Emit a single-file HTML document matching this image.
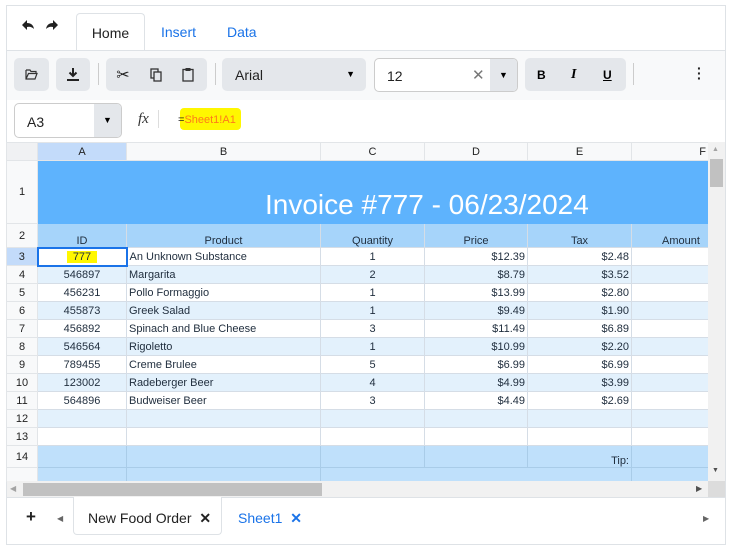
<!DOCTYPE html>
<html><head><meta charset="utf-8"><style>
*{box-sizing:border-box;margin:0;padding:0}
body{width:747px;height:555px;background:#fff;font-family:"Liberation Sans",Arial,sans-serif;position:relative;overflow:hidden}
.frame{position:absolute;left:6px;top:5px;width:720px;height:540px;border:1px solid #dee2e6}
.abs{position:absolute}
.btn{position:absolute;background:#e4e7eb;border-radius:5px;top:58px;height:33px}
.ic{position:absolute;top:0;height:33px;display:flex;align-items:center;justify-content:center;font-size:13px;color:#222}
table{position:absolute;left:6px;top:142px;border-collapse:collapse;table-layout:fixed;font-size:11px;color:#1f2d3d}
td{border:1px solid #d5dde6;padding:0 2px;white-space:nowrap;overflow:hidden}
.rh{background:#f8f9fa;text-align:center;color:#222;font-size:11px;border-color:#e2e5e8}
.ch td{background:#f8f9fa;text-align:center;color:#222;border-color:#e2e5e8;height:18px}
.c{text-align:center}.r{text-align:right}
.w td:not(.rh){background:#fff}
.b td:not(.rh){background:#e3f1fc}
</style></head><body>
<div class="frame"></div>
<svg class="abs" style="left:21px;top:19px" width="44" height="14" viewBox="0 0 44 14"><path d="M1 6 L6 1 L6 4 Q12 4 13 10 Q10 7 6 8 L6 11 Z" fill="#222"/><path d="M37 6 L32 1 L32 4 Q26 4 25 10 Q28 7 32 8 L32 11 Z" fill="#222"/></svg>
<div class="abs" style="left:76px;top:13px;width:69px;height:38px;border:1px solid #dee2e6;border-bottom:none;border-radius:4px 4px 0 0;background:#fff;font-size:14px;color:#222;text-align:center;line-height:38px">Home</div>
<div class="abs" style="left:161px;top:24px;font-size:14px;color:#1a73e8">Insert</div>
<div class="abs" style="left:227px;top:24px;font-size:14px;color:#1a73e8">Data</div>
<div class="abs" style="left:7px;top:50px;width:718px;height:50px;background:#f8f9fa;border-top:1px solid #dee2e6"></div>
<div class="btn" style="left:14px;width:35px"><svg style="position:absolute;left:11px;top:11px" width="13" height="11" viewBox="0 0 13 11"><path d="M1 1h4l1 1.5h5v2M1 1v9h9l2-5.5H3.5L1 10" fill="none" stroke="#333" stroke-width="1.2"/></svg></div>
<div class="btn" style="left:56px;width:34px"><svg style="position:absolute;left:10px;top:9px" width="14" height="15" viewBox="0 0 14 15"><path d="M7 1v8M3.5 5.5L7 9l3.5-3.5" fill="none" stroke="#222" stroke-width="2"/><rect x="1" y="12" width="12" height="2" fill="#222"/></svg></div>
<div class="abs" style="left:98px;top:63px;width:1px;height:22px;background:#ccc"></div>
<div class="btn" style="left:106px;width:101px">
<div class="ic" style="left:0;width:34px;font-size:16px">✂</div>
<svg style="position:absolute;left:44px;top:10px" width="13" height="14" viewBox="0 0 13 14"><rect x="1" y="1" width="7" height="9" fill="none" stroke="#333" stroke-width="1.3"/><rect x="4" y="4" width="7" height="9" fill="#e4e7eb" stroke="#333" stroke-width="1.3"/></svg>
<svg style="position:absolute;left:76px;top:9px" width="12" height="15" viewBox="0 0 12 15"><rect x="1" y="2.5" width="10" height="11.5" fill="none" stroke="#333" stroke-width="1.3"/><rect x="3.5" y="1" width="5" height="3" fill="#333"/></svg>
</div>
<div class="abs" style="left:215px;top:63px;width:1px;height:22px;background:#ccc"></div>
<div class="btn" style="left:222px;width:144px"><span style="position:absolute;left:13px;top:9px;font-size:14px;color:#222">Arial</span><span style="position:absolute;right:11px;top:11px;font-size:9px">▼</span></div>
<div class="abs" style="left:374px;top:58px;width:144px;height:34px;border:1px solid #ccc;border-radius:5px;background:#fff;overflow:hidden"><span style="position:absolute;left:12px;top:9px;font-size:14px;color:#222">12</span><span style="position:absolute;left:97px;top:7px;font-size:15px;color:#777">✕</span><div style="position:absolute;right:0;top:0;width:27px;height:33px;background:#e4e7eb;font-size:9px;text-align:center;line-height:33px">▼</div></div>
<div class="btn" style="left:525px;width:101px;font-size:12px"><b style="position:absolute;left:12px;top:10px">B</b><i style="position:absolute;left:46px;top:9px;font-family:'Liberation Serif',serif;font-size:14px;font-weight:bold">I</i><u style="position:absolute;left:78px;top:10px;font-weight:bold">U</u></div>
<div class="abs" style="left:633px;top:63px;width:1px;height:22px;background:#ccc"></div>
<div class="abs" style="left:697px;top:66px;font-size:14px;font-weight:bold;line-height:5px;color:#222">·<br>·<br>·</div>
<div class="abs" style="left:14px;top:103px;width:108px;height:35px;border:1px solid #ccc;border-radius:5px;overflow:hidden"><span style="position:absolute;left:12px;top:10px;font-size:14px;color:#222">A3</span><div style="position:absolute;right:0;top:0;width:27px;height:35px;background:#e4e7eb;font-size:9px;text-align:center;line-height:33px">▼</div></div>
<i class="abs" style="left:138px;top:111px;font-family:'Liberation Serif',serif;font-size:15px;color:#333">fx</i>
<div class="abs" style="left:158px;top:110px;width:1px;height:18px;background:#ddd"></div>
<div class="abs" style="left:180px;top:108px;width:61px;height:22px;background:#fff700;border-radius:4px"></div>
<div class="abs" style="left:178px;top:114px;font-size:11px;color:#222">=<span style="color:#ff7a1a">Sheet1!A1</span></div>
<table>
<colgroup><col style="width:31px"><col style="width:89px"><col style="width:194px"><col style="width:104px"><col style="width:103px"><col style="width:104px"><col style="width:77px"></colgroup>
<tr class="ch"><td style="background:#f0f1f3"></td><td style="background:#c3dbfa">A</td><td>B</td><td>C</td><td>D</td><td>E</td><td class="r" style="text-align:right">F</td></tr>
<tr style="height:63px"><td class="rh">1</td><td colspan="6" style="background:#5eb3fd;color:#fff;font-size:28px;padding-left:227px;padding-top:26px;border-color:#5eb3fd">Invoice #777 - 06/23/2024</td></tr>
<tr style="height:24px;vertical-align:bottom"><td class="rh" style="vertical-align:middle">2</td><td class="c" style="background:#a6d4fa">ID</td><td class="c" style="background:#a6d4fa">Product</td><td class="c" style="background:#a6d4fa">Quantity</td><td class="c" style="background:#a6d4fa">Price</td><td class="c" style="background:#a6d4fa">Tax</td><td style="background:#a6d4fa;padding-left:30px;text-overflow:clip">Amount</td></tr>
<tr class="w" style="height:18px"><td class="rh" style="background:#c3dbfa">3</td><td class="c" style="border:2px solid #1a73e8;background:#fff"><span style="background:#fff700;padding:0 6px">777</span></td><td>An Unknown Substance</td><td class="c">1</td><td class="r">$12.39</td><td class="r">$2.48</td><td></td></tr>
<tr class="b" style="height:18px"><td class="rh">4</td><td class="c">546897</td><td>Margarita</td><td class="c">2</td><td class="r">$8.79</td><td class="r">$3.52</td><td></td></tr>
<tr class="w" style="height:18px"><td class="rh">5</td><td class="c">456231</td><td>Pollo Formaggio</td><td class="c">1</td><td class="r">$13.99</td><td class="r">$2.80</td><td></td></tr>
<tr class="b" style="height:18px"><td class="rh">6</td><td class="c">455873</td><td>Greek Salad</td><td class="c">1</td><td class="r">$9.49</td><td class="r">$1.90</td><td></td></tr>
<tr class="w" style="height:18px"><td class="rh">7</td><td class="c">456892</td><td>Spinach and Blue Cheese</td><td class="c">3</td><td class="r">$11.49</td><td class="r">$6.89</td><td></td></tr>
<tr class="b" style="height:18px"><td class="rh">8</td><td class="c">546564</td><td>Rigoletto</td><td class="c">1</td><td class="r">$10.99</td><td class="r">$2.20</td><td></td></tr>
<tr class="w" style="height:18px"><td class="rh">9</td><td class="c">789455</td><td>Creme Brulee</td><td class="c">5</td><td class="r">$6.99</td><td class="r">$6.99</td><td></td></tr>
<tr class="b" style="height:18px"><td class="rh">10</td><td class="c">123002</td><td>Radeberger Beer</td><td class="c">4</td><td class="r">$4.99</td><td class="r">$3.99</td><td></td></tr>
<tr class="w" style="height:18px"><td class="rh">11</td><td class="c">564896</td><td>Budweiser Beer</td><td class="c">3</td><td class="r">$4.49</td><td class="r">$2.69</td><td></td></tr>
<tr class="b" style="height:18px"><td class="rh">12</td><td></td><td></td><td></td><td></td><td></td><td></td></tr>
<tr class="w" style="height:18px"><td class="rh">13</td><td></td><td></td><td></td><td></td><td></td><td></td></tr>
<tr style="height:22px;background:#bfe0fb"><td class="rh">14</td><td style="border-color:#a9cce8"></td><td style="border-color:#a9cce8"></td><td style="border-color:#a9cce8"></td><td style="border-color:#a9cce8"></td><td class="r" style="vertical-align:bottom;border-color:#a9cce8">Tip:</td><td style="border-color:#a9cce8"></td></tr>
<tr style="height:14px;background:#bfe0fb"><td class="rh"></td><td style="border-color:#a9cce8"></td><td style="border-color:#a9cce8"></td><td colspan="3" style="border-color:#a9cce8"></td><td style="border-color:#a9cce8"></td></tr>
</table>
<div class="abs" style="left:708px;top:142px;width:17px;height:339px;background:#f1f1f1"></div>
<div class="abs" style="left:710px;top:159px;width:13px;height:28px;background:#c1c1c1"></div>
<div class="abs" style="left:712px;top:146px;font-size:7px;color:#a3a3a3">▲</div>
<div class="abs" style="left:712px;top:467px;font-size:7px;color:#505050">▼</div>
<div class="abs" style="left:7px;top:481px;width:701px;height:16px;background:#f1f1f1"></div>
<div class="abs" style="left:708px;top:481px;width:17px;height:16px;background:#dcdcdc"></div>
<div class="abs" style="left:23px;top:483px;width:299px;height:13px;background:#c1c1c1"></div>
<div class="abs" style="left:10px;top:484px;font-size:8px;color:#a3a3a3">◀</div>
<div class="abs" style="left:696px;top:484px;font-size:8px;color:#505050">▶</div>
<div class="abs" style="left:7px;top:497px;width:718px;height:1px;background:#dee2e6"></div>
<div class="abs" style="left:26px;top:507px;font-size:17px;font-weight:bold;color:#222">+</div>
<div class="abs" style="left:57px;top:514px;font-size:8px;color:#666">◀</div>
<div class="abs" style="left:73px;top:497px;width:149px;height:38px;border:1px solid #dee2e6;border-top:none;border-radius:0 0 4px 4px;background:#fff"></div>
<div class="abs" style="left:88px;top:510px;font-size:14px;color:#222">New Food Order <b style="margin-left:4px">✕</b></div>
<div class="abs" style="left:238px;top:510px;font-size:14px;color:#1a73e8">Sheet1 <b style="margin-left:4px">✕</b></div>
<div class="abs" style="left:703px;top:514px;font-size:8px;color:#666">▶</div>
</body></html>
